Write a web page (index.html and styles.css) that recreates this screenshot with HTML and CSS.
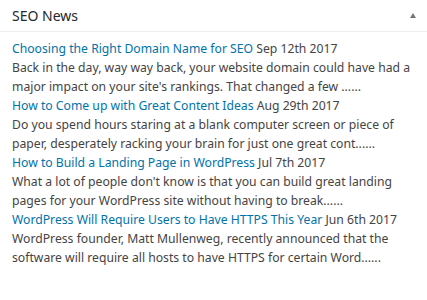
FILE: index.html
```html
<!DOCTYPE html>
<html lang="en">
<head>
<meta charset="UTF-8">
<meta name="viewport" content="width=device-width, initial-scale=1.0">
<title>SEO News</title>
<link rel="stylesheet" href="styles.css">
</head>
<body>
<div class="postbox">
<div class="postbox-header">
<h2 class="hndle">SEO News</h2>
<span class="toggle-indicator"></span>
</div>
<div class="inside">
<ul class="news-list">
<li><a href="#">Choosing the Right Domain Name for SEO</a> Sep 12th 2017<br>Back in the day, way way back, your website domain could have had a major impact on your site's rankings. That changed a few ......</li>
<li><a href="#">How to Come up with Great Content Ideas</a> Aug 29th 2017<br>Do you spend hours staring at a blank computer screen or piece of paper, desperately racking your brain for just one great cont......</li>
<li><a href="#">How to Build a Landing Page in WordPress</a> Jul 7th 2017<br>What a lot of people don't know is that you can build great landing pages for your WordPress site without having to break......</li>
<li><a href="#">WordPress Will Require Users to Have HTTPS This Year</a> Jun 6th 2017<br>WordPress founder, Matt Mullenweg, recently announced that the software will require all hosts to have HTTPS for certain Word......</li>
</ul>
</div>
</div>
</body>
</html>
```
FILE: styles.css
```css
body {
	margin: 0;
	background: #fff;
	font-family: "Noto Sans", "Open Sans", sans-serif;
	font-size: 12.2px;
	color: #444;
}
.postbox {
	background: #fff;
	width: 427px;
	height: 300px;
}
.postbox-header {
	display: flex;
	align-items: center;
	justify-content: space-between;
	height: 31px;
	padding: 0 11px 0 12px;
	border-bottom: 1px solid #eee;
}
.hndle {
	margin: -1px 0 0;
	font-size: 14px;
	font-weight: 400;
	color: #23282d;
}
.toggle-indicator {
	width: 0;
	height: 0;
	border-left: 3.5px solid transparent;
	border-right: 3.5px solid transparent;
	border-bottom: 5px solid #72777c;
	margin-top: 0;
}
.inside {
	padding: 7px 12px 0;
}
.news-list {
	list-style: none;
	margin: 0;
	padding: 0;
}
.news-list li {
	line-height: 19px;
	margin: 0;
}
.news-list a {
	color: #0073aa;
	text-decoration: none;
}
```
